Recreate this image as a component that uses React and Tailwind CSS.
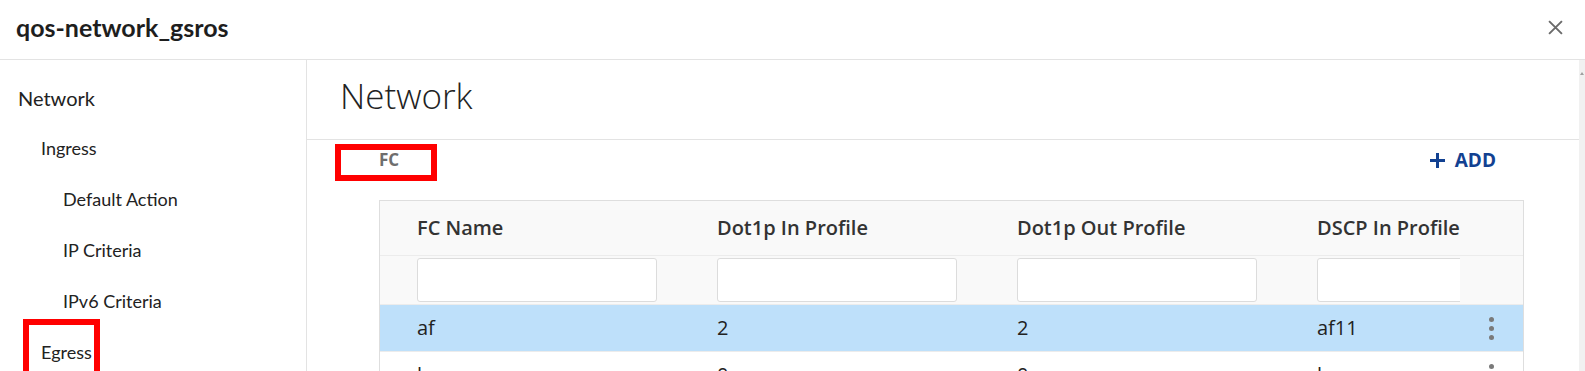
const columns = ['FC Name', 'Dot1p In Profile', 'Dot1p Out Profile', 'DSCP In Profile']
const rows = [
  { cells: ['af', '2', '2', 'af11'], selected: true },
  { cells: ['be', '0', '0', 'be'], selected: false },
]

function Kebab() {
  return (
    <div className="flex flex-col items-center gap-[4px]">
      <span className="w-[5px] h-[5px] rounded-full bg-[#7a7a7a]" />
      <span className="w-[5px] h-[5px] rounded-full bg-[#7a7a7a]" />
      <span className="w-[5px] h-[5px] rounded-full bg-[#7a7a7a]" />
    </div>
  )
}

function SideItem({ label, indent, size, boxed }) {
  return (
    <div className={`relative h-[51px] shrink-0 flex items-center text-[#222] ${indent} ${size}`}>
      {boxed && (
        <div className="absolute left-[23px] top-[-8px] w-[77px] h-[60px] border-[6px] border-[#ff0000]" />
      )}
      <span className="relative">{label}</span>
    </div>
  )
}

export default function App() {
  return (
    <div className="w-full h-[371px] overflow-hidden bg-white flex flex-col font-['Lato',sans-serif]">
      {/* Header */}
      <header className="h-[60px] shrink-0 flex items-center justify-between pl-[16px] pr-[22px] border-b border-[#e3e3e3]">
        <h1 className="text-[25px] font-bold text-[#1e1e1e] -mt-[4px]">qos-network_gsros</h1>
        <svg className="w-[15px] h-[15px] text-[#6b6b6b] -mt-[4px]" viewBox="0 0 14 14" fill="none" stroke="currentColor" strokeWidth="1.8">
          <path d="M1 1l12 12M13 1L1 13" />
        </svg>
      </header>

      <div className="flex flex-1 min-h-0">
        {/* Sidebar */}
        <aside className="w-[307px] shrink-0 border-r border-[#e3e3e3] pt-[12px] flex flex-col">
          <SideItem label="Network" indent="pl-[18px]" size="text-[20px]" />
          <SideItem label="Ingress" indent="pl-[41px]" size="text-[18px]" />
          <SideItem label="Default Action" indent="pl-[63px]" size="text-[18px]" />
          <SideItem label="IP Criteria" indent="pl-[63px]" size="text-[18px]" />
          <SideItem label="IPv6 Criteria" indent="pl-[63px]" size="text-[18px]" />
          <SideItem label="Egress" indent="pl-[41px]" size="text-[18px]" boxed />
        </aside>

        {/* Main */}
        <main className="flex-1 min-w-0 flex flex-col">
          <div className="h-[80px] shrink-0 border-b border-[#e3e3e3] flex items-center pl-[33px]">
            <h2 className="text-[35px] font-light text-[#222] font-['Open_Sans',sans-serif] -mt-[6px]">Network</h2>
          </div>

          <div className="flex items-center justify-between h-[60px] shrink-0 pr-[83px]">
            <div className="relative pl-[72px] -mt-[20px]">
              <div className="absolute left-[28px] top-[-3px] w-[102px] h-[37px] border-[6px] border-[#ff0000]" />
              <span className="text-[17px] font-bold text-[#6e6e6e] font-['Open_Sans',sans-serif]">FC</span>
            </div>
            <button className="flex items-center gap-[10px] text-[#124191] text-[19px] font-bold font-['Open_Sans',sans-serif] -mt-[20px]">
              <svg className="w-[15px] h-[15px]" viewBox="0 0 15 15" fill="none" stroke="currentColor" strokeWidth="3">
                <path d="M7.5 0v15M0 7.5h15" />
              </svg>
              <span>ADD</span>
            </button>
          </div>

          {/* Table */}
          <div className="shrink-0 ml-[72px] mr-[55px] border border-[#dedede] border-b-0 font-['Open_Sans',sans-serif] text-[20px]">
            <div className="flex h-[55px] bg-[#f9f9f9] border-b border-[#ececec]">
              <div className="flex-1 min-w-0 overflow-hidden flex items-center pl-[37px]">
                {columns.map((c) => (
                  <div key={c} className="w-[300px] shrink-0 font-semibold text-[#333] whitespace-nowrap">{c}</div>
                ))}
              </div>
              <div className="w-[63px] shrink-0" />
            </div>

            <div className="flex h-[49px] bg-[#f9f9f9] border-b border-[#ececec]">
              <div className="flex-1 min-w-0 overflow-hidden flex items-center pl-[37px]">
                {columns.map((c) => (
                  <div key={c} className="w-[300px] shrink-0">
                    <div className="w-[240px] h-[44px] bg-white border border-[#dcdcdc] rounded-[3px]" />
                  </div>
                ))}
              </div>
              <div className="w-[63px] shrink-0" />
            </div>

            {rows.map((r, i) => (
              <div key={i} className={`flex h-[47px] border-b border-[#ececec] ${r.selected ? 'bg-[#bee0fa]' : 'bg-white'}`}>
                <div className="flex-1 min-w-0 overflow-hidden flex items-center pl-[37px]">
                  {r.cells.map((v, j) => (
                    <div key={j} className="w-[300px] shrink-0 text-[#222]">{v}</div>
                  ))}
                </div>
                <div className="w-[63px] shrink-0 flex items-center justify-center">
                  <Kebab />
                </div>
              </div>
            ))}
          </div>
        </main>

        {/* Scrollbar */}
        <div className="w-[6px] shrink-0 bg-[#f1f1f1] flex justify-center pt-[12px]">
          <div className="w-0 h-0 border-l-[2px] border-r-[2px] border-b-[3px] border-l-transparent border-r-transparent border-b-[#a0a0a0]" />
        </div>
      </div>
    </div>
  )
}
